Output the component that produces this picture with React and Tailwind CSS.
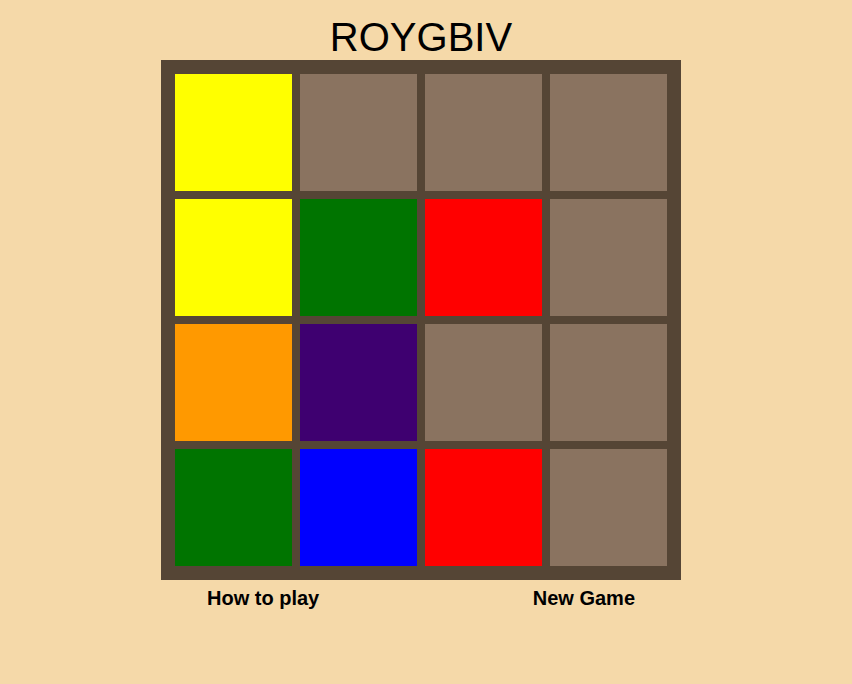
const COLORS = {
  Y: "bg-[#ffff00]",
  G: "bg-[#007400]",
  R: "bg-[#ff0000]",
  O: "bg-[#ff9900]",
  P: "bg-[#3e0070]",
  B: "bg-[#0000ff]",
  _: "bg-[#8a7360]",
};

// board state, row by row
const board = [
  ["Y", "_", "_", "_"],
  ["Y", "G", "R", "_"],
  ["O", "P", "_", "_"],
  ["G", "B", "R", "_"],
];

const App = () => {
  return (
    <div
      className="min-h-screen w-full bg-[#f5d9a9] pr-[10px] flex flex-col items-center"
      style={{ fontFamily: '"Liberation Sans", Arial, sans-serif' }}
    >
      <h1 className="mt-[14px] text-[40px] leading-[46px] text-black">ROYGBIV</h1>

      <div className="w-[520px] h-[520px] bg-[#554535] p-[14px] grid grid-cols-4 grid-rows-4 gap-[8px]">
        {board.flat().map((c, i) => (
          <div key={i} className={`${COLORS[c]} w-full h-full`} />
        ))}
      </div>

      <div className="w-[520px] px-[46px] mt-[7px] flex justify-between text-[20px] leading-[23px] font-bold text-black">
        <button className="cursor-pointer">How to play</button>
        <button className="cursor-pointer">New Game</button>
      </div>
    </div>
  );
};

export default App;
